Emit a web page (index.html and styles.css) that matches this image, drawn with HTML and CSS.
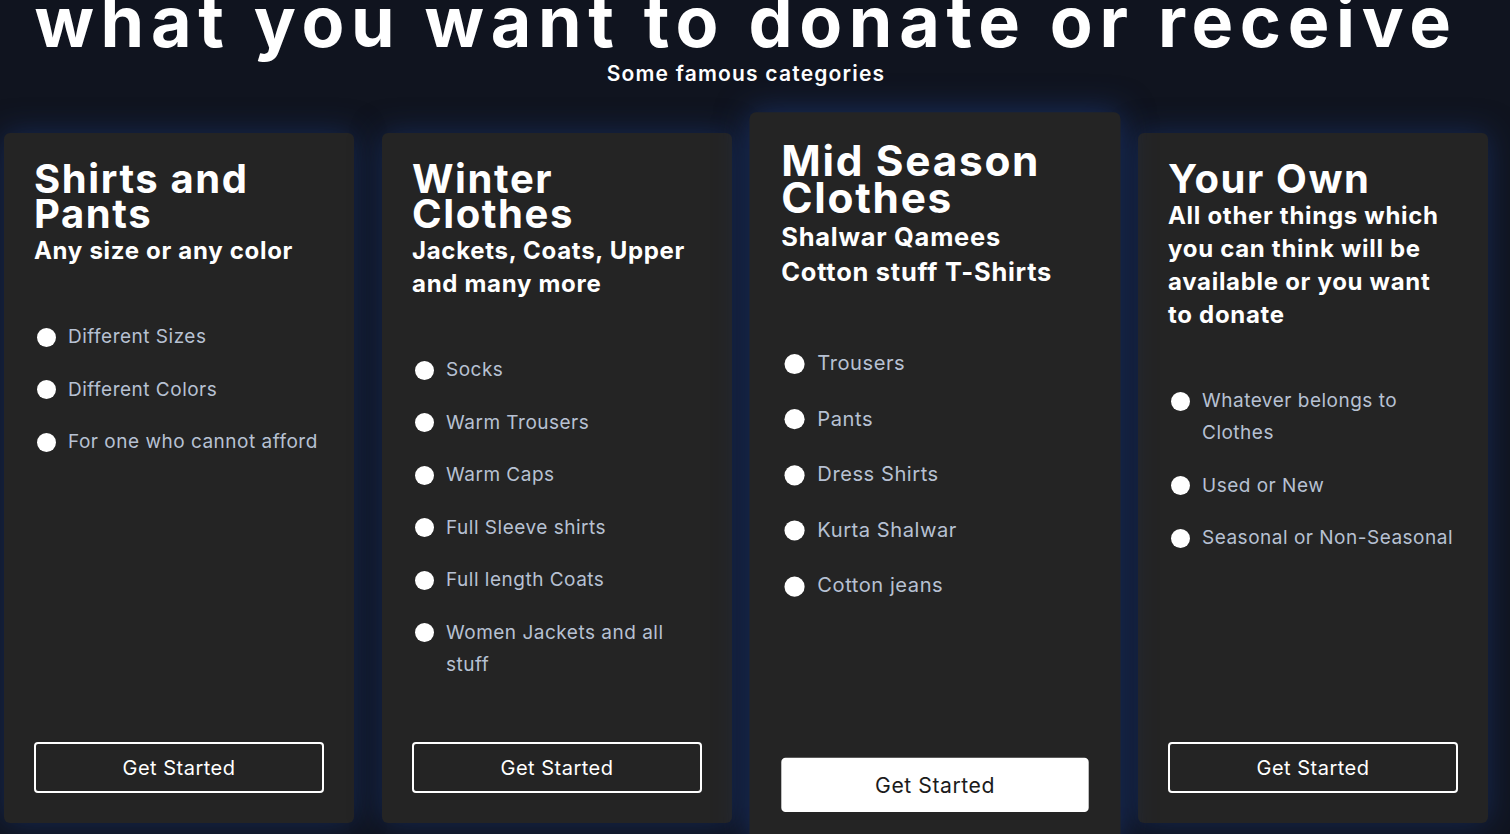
FILE: index.html
```html
<!DOCTYPE html>
<html lang="en">
<head>
<meta charset="utf-8">
<title>Categories</title>
<link rel="stylesheet" href="styles.css">
</head>
<body>
<section class="plans">
  <header class="plans-head">
    <h1 class="plans-title">what you want to donate or receive</h1>
    <p class="plans-sub">Some famous categories</p>
  </header>
  <div class="cards">
    <article class="card">
      <h2 class="card-title">Shirts and Pants</h2>
      <h3 class="card-sub">Any size or any color</h3>
      <ul class="card-list">
        <li>Different Sizes</li>
        <li>Different Colors</li>
        <li>For one who cannot afford</li>
      </ul>
      <a class="card-btn" href="#">Get Started</a>
    </article>
    <article class="card">
      <h2 class="card-title">Winter Clothes</h2>
      <h3 class="card-sub">Jackets, Coats, Upper and many more</h3>
      <ul class="card-list">
        <li>Socks</li>
        <li>Warm Trousers</li>
        <li>Warm Caps</li>
        <li>Full Sleeve shirts</li>
        <li>Full length Coats</li>
        <li>Women Jackets and all stuff</li>
      </ul>
      <a class="card-btn" href="#">Get Started</a>
    </article>
    <article class="card card-active">
      <h2 class="card-title">Mid Season Clothes</h2>
      <h3 class="card-sub">Shalwar Qamees Cotton stuff T-Shirts</h3>
      <ul class="card-list">
        <li>Trousers</li>
        <li>Pants</li>
        <li>Dress Shirts</li>
        <li>Kurta Shalwar</li>
        <li>Cotton jeans</li>
      </ul>
      <a class="card-btn" href="#">Get Started</a>
    </article>
    <article class="card">
      <h2 class="card-title">Your Own</h2>
      <h3 class="card-sub">All other things which you can think will be available or you want to donate</h3>
      <ul class="card-list">
        <li>Whatever belongs to Clothes</li>
        <li>Used or New</li>
        <li>Seasonal or Non-Seasonal</li>
      </ul>
      <a class="card-btn" href="#">Get Started</a>
    </article>
  </div>
</section>
</body>
</html>
```

FILE: styles.css
```css
* { box-sizing: border-box; }

html, body {
  margin: 0;
  padding: 0;
  height: 100%;
  overflow: hidden;
}

body {
  background: #10141f;
  color: #ffffff;
  font-family: "Inter", "Noto Sans", sans-serif;
}

.plans {
  width: 1492px;
  padding: 0 4px;
}

.plans-head {
  text-align: center;
  margin-top: -13px;
}

.plans-title {
  margin: 0;
  font-size: 70px;
  line-height: 70px;
  font-weight: 700;
  letter-spacing: 6.7px;
  white-space: nowrap;
  color: #ffffff;
}

.plans-sub {
  margin: 4px 0 0;
  font-size: 21px;
  font-weight: 600;
  line-height: 26px;
  letter-spacing: 1.2px;
}

.cards {
  display: flex;
  gap: 28px;
  margin-top: 46px;
}

.card {
  flex: 0 0 350px;
  min-height: 690px;
  background: #242424;
  border-radius: 6px;
  padding: 28px 30px 30px;
  display: flex;
  flex-direction: column;
  box-shadow: 0 0 30px rgba(28, 58, 125, 0.55);
}

.card-active {
  transform: scale(1.06);
  box-shadow: 0 0 30px rgba(28, 58, 125, 0.7);
}

.card-title {
  margin: 0 0 3px;
  font-size: 40px;
  line-height: 35px;
  font-weight: 700;
  letter-spacing: 1.6px;
}

.card-sub {
  margin: 0;
  font-size: 24px;
  line-height: 33px;
  font-weight: 700;
  letter-spacing: 0.7px;
}

.card-list {
  list-style: none;
  margin: 54px 0 0;
  padding: 0;
  display: flex;
  flex-direction: column;
  gap: 20.5px;
}

.card-list li {
  display: flex;
  gap: 12px;
  font-size: 19px;
  line-height: 32px;
  letter-spacing: 0.5px;
  color: #b7c1d3;
}

.card-list li::before {
  content: "";
  flex: 0 0 19px;
  height: 19px;
  margin: 6.5px 0 0 3px;
  border-radius: 50%;
  background: #ffffff;
}

.card-btn {
  margin-top: auto;
  display: flex;
  align-items: center;
  justify-content: center;
  height: 51px;
  border: 2px solid #ffffff;
  border-radius: 4px;
  color: #ffffff;
  font-size: 20px;
  letter-spacing: 0.5px;
  text-decoration: none;
}

.card-active .card-btn {
  background: #ffffff;
  color: #1b1b1b;
}
```
